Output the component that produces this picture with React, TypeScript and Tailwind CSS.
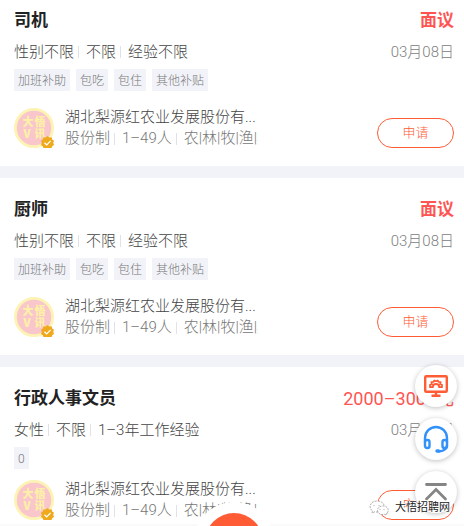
import React from "react";

type Job = {
  title: string;
  pay: string;
  fixedPay: boolean;
  meta: string[];
  tags: string[];
};

const jobs: Job[] = [
  { title: "司机", pay: "面议", fixedPay: false, meta: ["性别不限", "不限", "经验不限"], tags: ["加班补助", "包吃", "包住", "其他补贴"] },
  { title: "厨师", pay: "面议", fixedPay: false, meta: ["性别不限", "不限", "经验不限"], tags: ["加班补助", "包吃", "包住", "其他补贴"] },
  { title: "行政人事文员", pay: "2000–3000元", fixedPay: true, meta: ["女性", "不限", "1–3年工作经验"], tags: ["0"] },
];

function Facts({ items }: { items: string[] }) {
  return (
    <ul className="flex whitespace-nowrap">
      {items.map((item, i) => (
        <li key={item} className="flex items-center">
          {i > 0 && <span className="mr-[7px] ml-1 h-3 w-px bg-[#e2e2e6]" />}
          {item}
        </li>
      ))}
    </ul>
  );
}

function Logo() {
  return (
    <svg viewBox="0 0 40 40" className="size-10 shrink-0" aria-label="大悟V讯">
      <circle cx="20" cy="20" r="18.6" fill="#f9c6cb" stroke="#fdf3b4" strokeWidth="2.8" />
      <g fill="#fdf1a8" fontFamily="'Noto Sans CJK SC', sans-serif" fontWeight="900" fontSize="11" textAnchor="middle">
        <text x="14" y="18">大</text>
        <text x="26" y="18">悟</text>
        <text x="13" y="30">V</text>
        <text x="26" y="30">讯</text>
      </g>
      <path d="M33.5 28l1.8 1.4 2.2-.1.7 2.1 1.8 1.3-.8 2.1.8 2.1-1.8 1.3-.7 2.1-2.2-.1-1.8 1.4-1.8-1.4-2.2.1-.7-2.1-1.8-1.3.8-2.1-.8-2.1 1.8-1.3.7-2.1 2.2.1z" fill="#efa91c" />
      <path d="M30.5 34.8l2.2 2.1 3.9-4" fill="none" stroke="#fff" strokeWidth="1.3" />
    </svg>
  );
}

function JobCard({ job }: { job: Job }) {
  return (
    <article className="bg-white pt-5 pr-[10px] pb-[17px] pl-[14px]">
      <div className="flex h-6 items-center justify-between text-[17px]">
        <h2 className="font-bold text-[#222]">{job.title}</h2>
        <span className={`text-[#ff5552] ${job.fixedPay ? "text-lg" : "font-bold"}`}>{job.pay}</span>
      </div>
      <div className="mt-[7px] flex h-6 items-center justify-between text-[15px] font-light text-[#444]">
        <Facts items={job.meta} />
        <time className="text-[#808080]">03月08日</time>
      </div>
      <ul className="mt-[5px] flex gap-[6px]">
        {job.tags.map((tag) => (
          <li key={tag} className="h-[22px] bg-[#f2f3f9] px-1 text-xs leading-6 font-light text-[#777]">{tag}</li>
        ))}
      </ul>
      <div className={`flex items-center ${job.tags.length > 1 ? "mt-4" : "mt-[10px]"}`}>
        <Logo />
        <div className="ml-[11px] w-[193px] overflow-hidden text-[15px] leading-[21px] font-light whitespace-nowrap text-[#777]">
          <p className="text-[#444]">湖北梨源红农业发展股份有...</p>
          <Facts items={["股份制", "1–49人", "农|林|牧|渔|其他"]} />
        </div>
        <button className="mb-px ml-auto h-[30px] w-[77px] self-end rounded-full border border-[#ff5c36] text-[13px] font-light text-[#ff5c36]">申请</button>
      </div>
    </article>
  );
}

const round = "flex size-[42px] items-center justify-center rounded-full bg-white shadow-[0_1px_5px_rgba(0,0,0,0.25)]";

export default function App() {
  return (
    <main className="relative h-screen overflow-hidden bg-white font-[Roboto,'Noto_Sans_CJK_SC',sans-serif]">
      <div className="-mt-[11px] flex flex-col gap-3 bg-[#f2f3f9]">
        {jobs.map((job) => (
          <JobCard key={job.title} job={job} />
        ))}
      </div>

      <nav className="absolute inset-x-0 bottom-0 flex h-[2px] justify-center bg-[#fafafa] pr-[10px] pl-[14px]">
        <button aria-label="发布" className="-mt-[22px] size-20 shrink-0 rounded-full bg-white p-[11px]">
          <span className="block size-full rounded-full bg-[#ff5c36]" />
        </button>
      </nav>

      <div className="absolute right-[7px] bottom-[13px] flex flex-col gap-[11px]">
        <button aria-label="电脑版" className={round}>
          <svg width="26" height="26" viewBox="0 0 26 26" fill="none" stroke="#ff5c36" strokeWidth="2.4" strokeLinejoin="round">
            <rect x="2.2" y="3.2" width="21.6" height="15.6" rx="1" />
            <path d="M13 19v4M8.5 22.8h9" />
            <path d="M7 14.2h2.8a3.2 3.2 0 016.4 0H19v-2.4l-1.8-.6.4-2-2.1-.3-.8-1.4-1.7.8-1.7-.8-.8 1.4-2.1.3.4 2-1.8.6z" strokeWidth="1.8" />
          </svg>
        </button>
        <button aria-label="客服" className={round}>
          <svg width="28" height="28" viewBox="0 0 28 28" fill="none" stroke="#3292fa" strokeWidth="2.4" strokeLinecap="round">
            <path d="M3 17v-4a11 11 0 0122 0v4M25 20c0 4-3 6-8 6.5" />
            <rect x="3" y="15" width="4.5" height="8" rx="2" />
            <rect x="20.5" y="15" width="4.5" height="8" rx="2" />
            <path d="M15 26h1.5" strokeWidth="3.4" />
          </svg>
        </button>
        <button aria-label="回到顶部" className={round}>
          <svg width="24" height="24" viewBox="0 0 24 24" fill="none" stroke="#858585" strokeWidth="2.8" strokeLinecap="round">
            <path d="M2.5 4.5h19M2.5 19l9.5-9.5 9.5 9.5" />
          </svg>
        </button>
      </div>

      <div className="absolute right-[14px] bottom-[10px] flex items-center gap-[6px] text-[11px] leading-4 text-[#222] [text-shadow:1px_0_0_#fff,-1px_0_0_#fff,0_1px_0_#fff,0_-1px_0_#fff]">
        <svg width="20" height="16" viewBox="0 0 20 16" fill="#fff" stroke="#999" strokeWidth="0.8" strokeDasharray="2 1">
          <path d="M9 12c-1 .2-2 0-3-.3L3 13l.6-2C-1 8 1 1 8 1c4 0 7 2 7 5" />
          <path d="M18 13c3-3 0-8-5-7-5 .6-6 6-2 8 2 .8 3 .7 4.5.3l2 .9z" />
          <path d="M5 5v1M10 5v1M11 9v1M15 9v1" />
        </svg>
        <span>大悟招聘网</span>
      </div>
    </main>
  );
}
